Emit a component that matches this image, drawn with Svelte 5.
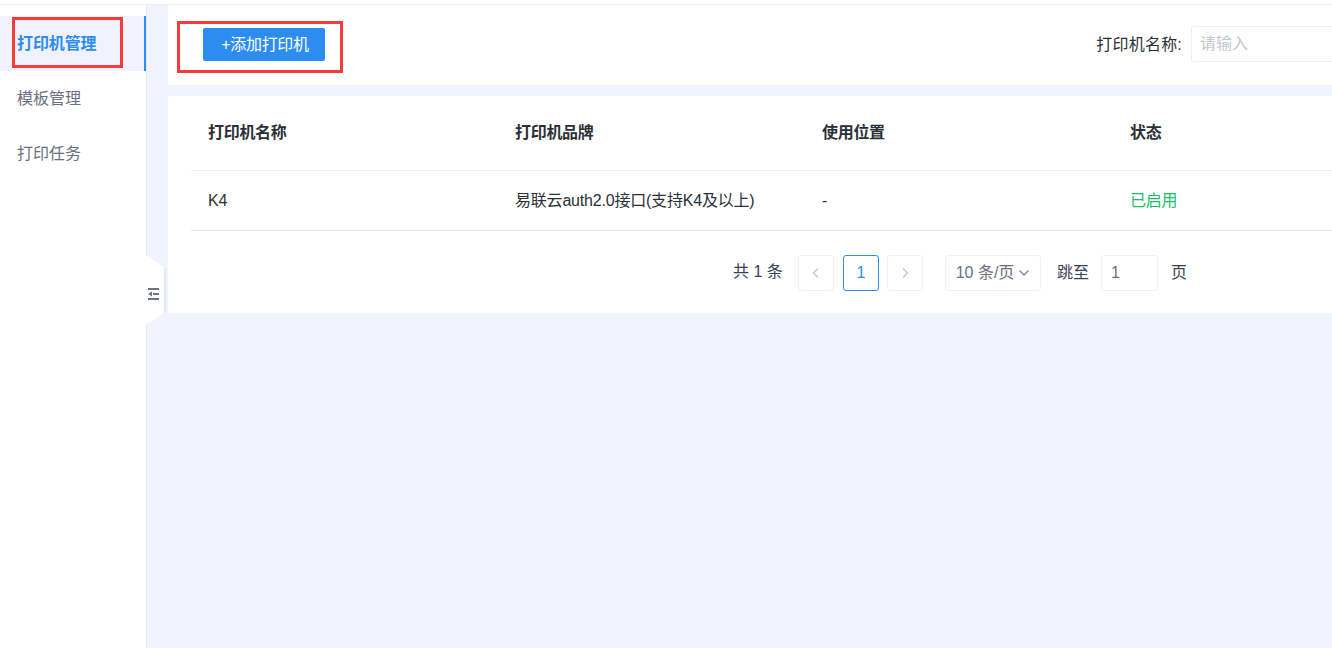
<script>
    const menu = [
        { name: '打印机管理', active: true },
        { name: '模板管理', active: false },
        { name: '打印任务', active: false },
    ];
    const columns = ['打印机名称', '打印机品牌', '使用位置', '状态'];
</script>

<div class="page">
    <div class="topbar"></div>
    <div class="layout">
        <aside class="sidebar">
            <ul class="menu">
                {#each menu as item}
                    <li class="menu-item" class:active={item.active}>{item.name}</li>
                {/each}
            </ul>
            <div class="mark mark-menu"></div>
        </aside>

        <main class="main">
            <section class="toolbar">
                <button class="add">+添加打印机</button>
                <div class="filter">
                    <span class="filter-label">打印机名称:</span>
                    <input class="filter-input" placeholder="请输入" />
                </div>
                <div class="mark mark-add"></div>
            </section>

            <section class="card">
                <div class="row head">
                    {#each columns as col}
                        <div class="cell">{col}</div>
                    {/each}
                </div>
                <div class="row body">
                    <div class="cell">K4</div>
                    <div class="cell">易联云auth2.0接口(支持K4及以上)</div>
                    <div class="cell">-</div>
                    <div class="cell enabled">已启用</div>
                </div>
                <div class="pager">
                    <span class="total">共 1 条</span>
                    <span class="box nav">
                        <svg width="10" height="12" viewBox="0 0 10 12"><path d="M7 1.5L2.5 6 7 10.5" stroke="#c5c8ce" stroke-width="1.4" fill="none" /></svg>
                    </span>
                    <span class="box current">1</span>
                    <span class="box nav">
                        <svg width="10" height="12" viewBox="0 0 10 12"><path d="M3 1.5L7.5 6 3 10.5" stroke="#c5c8ce" stroke-width="1.4" fill="none" /></svg>
                    </span>
                    <span class="box size">
                        <span class="size-text">10 条/页</span>
                        <svg width="12" height="8" viewBox="0 0 12 8"><path d="M1.5 1.5L6 6l4.5-4.5" stroke="#808695" stroke-width="1.3" fill="none" /></svg>
                    </span>
                    <span class="jump">跳至</span>
                    <span class="box jump-input">1</span>
                    <span class="unit">页</span>
                </div>
            </section>
        </main>
    </div>

    <div class="collapse">
        <svg width="12" height="12" viewBox="0 0 12 12">
            <path d="M0 1h11M5 6h6M0 11h11" stroke="#6d7480" stroke-width="2" fill="none" />
            <path d="M0 6l4-2.500v5z" fill="#6d7480" />
        </svg>
    </div>
</div>

<style>
    :global(body) {
        margin: 0;
        overflow: hidden;
    }

    .page {
        position: relative;
        width: 1332px;
        height: 648px;
        overflow: hidden;
        background: #f1f4fe;
        font-family: "Liberation Sans", "Noto Sans CJK SC", sans-serif;
        font-size: 16px;
        color: #2b2f38;
    }

    .topbar {
        box-sizing: border-box;
        height: 5px;
        background: #fff;
        border-bottom: 1px solid #eceef1;
    }

    .layout {
        display: flex;
        height: 643px;
    }

    .sidebar {
        position: relative;
        flex: none;
        box-sizing: border-box;
        width: 147px;
        padding-top: 11px;
        background: #fff;
        border-right: 1px solid #e6e9f4;
    }

    .menu {
        list-style: none;
        margin: 0;
        padding: 0;
    }

    .menu-item {
        box-sizing: border-box;
        height: 55px;
        line-height: 55px;
        padding-left: 17px;
        color: #6a7080;
    }

    .menu-item.active {
        color: #2d8cf0;
        font-weight: 700;
        letter-spacing: -0.1px;
        background: #f0f3ff;
        border-right: 2px solid #2d8cf0;
    }

    .mark {
        position: absolute;
        box-sizing: border-box;
        border: 3px solid #f93a3a;
        pointer-events: none;
    }

    .mark-menu {
        left: 12px;
        top: 12px;
        width: 111px;
        height: 51px;
    }

    .mark-add {
        left: 9px;
        top: 16px;
        width: 166px;
        height: 52px;
    }

    .collapse {
        position: absolute;
        left: 146px;
        top: 255px;
        display: flex;
        align-items: center;
        box-sizing: border-box;
        width: 21px;
        height: 70px;
        padding: 8px 0 0 2px;
        background: linear-gradient(to right, #fff 18px, #e1e4ee 18px, #eef1fb 21px);
        clip-path: polygon(0 0, 18px 12px, 21px 14px, 21px 56px, 18px 58px, 0 100%);
    }

    .main {
        flex: 1;
        min-width: 0;
        padding-left: 21px;
    }

    .toolbar {
        position: relative;
        display: flex;
        align-items: center;
        justify-content: space-between;
        box-sizing: border-box;
        height: 80px;
        background: #fff;
        padding-left: 35px;
    }

    .add {
        width: 122px;
        height: 33px;
        margin-top: -1px;
        padding: 0 0 3px 2px;
        border: none;
        border-radius: 2px;
        background: #2d8cf0;
        color: #fff;
        font: inherit;
        letter-spacing: -0.3px;
    }

    .filter {
        display: flex;
        align-items: center;
        margin-top: -2px;
    }

    .filter-label {
        margin-right: 9px;
        padding-bottom: 2px;
        white-space: nowrap;
        letter-spacing: 0.2px;
    }

    .filter-input {
        box-sizing: border-box;
        width: 141px;
        height: 36px;
        padding: 0 8px;
        border: 1px solid #eff0f3;
        border-right: none;
        border-radius: 3px 0 0 3px;
        font: inherit;
    }

    .filter-input::placeholder {
        color: #c5c8ce;
    }

    .card {
        margin-top: 11px;
        height: 217px;
        background: #fff;
        padding-left: 23px;
        border-radius: 3px 0 0 0;
    }

    .row {
        display: grid;
        grid-template-columns: 307px 307px 308px 1fr;
        box-sizing: border-box;
        padding-left: 17px;
        border-bottom: 1px solid #eef0f3;
    }

    .cell {
        line-height: 22px;
    }

    .head {
        height: 75px;
        align-items: center;
        font-weight: 700;
        letter-spacing: -0.3px;
    }

    .body {
        height: 60px;
        padding-top: 1px;
        align-items: center;
        border-bottom-color: #e6e8ec;
        letter-spacing: -0.2px;
    }

    .enabled {
        color: #19be6b;
    }

    .pager {
        display: flex;
        align-items: center;
        height: 36px;
        margin-top: 24px;
        padding-left: 542px;
        color: #3a4256;
    }

    .total {
        width: 65px;
        padding-bottom: 3px;
        line-height: 20px;
        white-space: nowrap;
    }

    .box {
        display: flex;
        align-items: center;
        justify-content: center;
        box-sizing: border-box;
        height: 36px;
        border: 1px solid #f0f1f4;
        border-radius: 3px;
        background: #fff;
    }

    .nav {
        width: 36px;
    }

    .current {
        width: 36px;
        margin: 0 8px 0 9px;
        border-color: #2d8cf0;
        color: #2d8cf0;
    }

    .size {
        width: 96px;
        margin-left: 22px;
        gap: 4px;
        color: #6a7080;
        white-space: nowrap;
    }

    .size-text {
        padding-bottom: 1px;
        line-height: 20px;
    }

    .jump {
        width: 44px;
        margin-left: 16px;
        padding-bottom: 1px;
        line-height: 20px;
    }

    .jump-input {
        justify-content: flex-start;
        width: 57px;
        padding-left: 9px;
        color: #6a7080;
    }

    .unit {
        margin-left: 13px;
        padding-bottom: 1px;
        line-height: 20px;
    }
</style>
